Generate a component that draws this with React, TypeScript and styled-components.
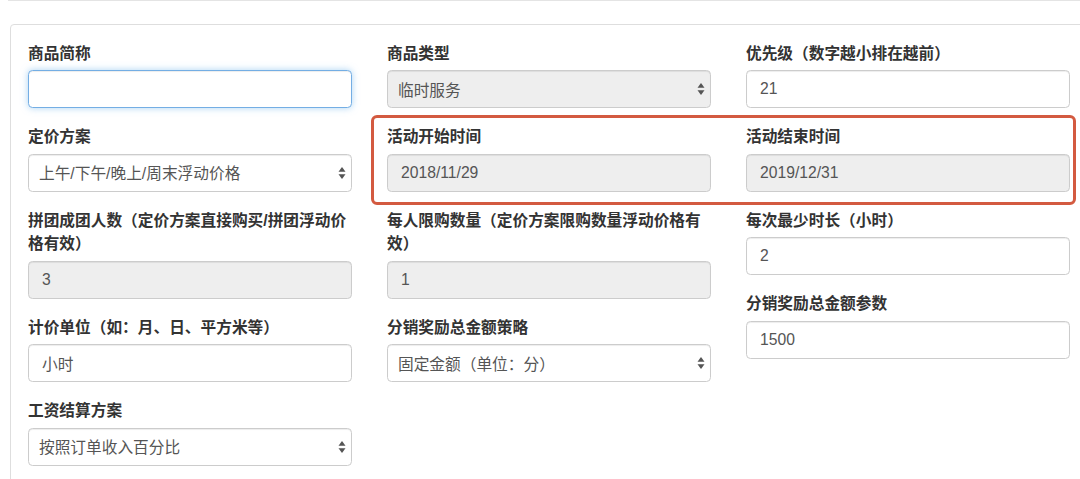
import styled, { createGlobalStyle } from 'styled-components';

const GlobalStyle = createGlobalStyle`
  html, body {
    margin: 0;
    padding: 0;
    background: #ffffff;
    overflow: hidden;
  }
  body {
    font-family: "Liberation Sans", "Noto Sans CJK SC", sans-serif;
    color: #333333;
  }
`;

const Page = styled.div`
  width: 1080px;
  height: 479px;
  overflow: hidden;
`;

const PrevPanelEdge = styled.div`
  margin-left: 8px;
  height: 1px;
  background: #e4e4e4;
`;

const Panel = styled.div`
  margin: 23px 0 0 10px;
  width: 1100px;
  height: 600px;
  border: 1px solid #dedede;
  border-radius: 4px;
  padding: 16.5px 0 0 17px;
  box-sizing: border-box;
`;

const Grid = styled.div`
  position: relative;
  display: grid;
  grid-template-columns: 324px 324px 324px;
  column-gap: 35px;
  align-items: start;
`;

const Column = styled.div`
  display: flex;
  flex-direction: column;
`;

const FormGroup = styled.div`
  margin-bottom: 17px;
`;

const Label = styled.label`
  display: block;
  font-size: 15.7px;
  font-weight: bold;
  line-height: 23.5px;
  margin-bottom: 5px;
  color: #333333;
`;

const Input = styled.input<{ $focused?: boolean }>`
  display: block;
  width: 100%;
  height: 38px;
  box-sizing: border-box;
  padding: 0 13px;
  font-family: inherit;
  font-size: 15.7px;
  color: #555555;
  background: ${({ disabled }) => (disabled ? '#eeeeee' : '#ffffff')};
  border: 1px solid ${({ $focused }) => ($focused ? '#74aee4' : '#cccccc')};
  border-radius: 4.5px;
  outline: none;
  box-shadow: ${({ $focused }) =>
    $focused
      ? 'inset 0 1px 1px rgba(0,0,0,.075), 0 0 7px rgba(102,175,233,.55)'
      : 'inset 0 1px 1px rgba(0,0,0,.075)'};
  &:disabled {
    -webkit-text-fill-color: #555555;
    opacity: 1;
  }
`;

const SelectBox = styled.div<{ $disabled?: boolean }>`
  display: flex;
  align-items: center;
  justify-content: space-between;
  height: 38px;
  box-sizing: border-box;
  padding: 0 5px 0 10px;
  font-size: 15.7px;
  color: #555555;
  background: ${({ $disabled }) => ($disabled ? '#eeeeee' : '#ffffff')};
  border: 1px solid #cccccc;
  border-radius: 4.5px;
  box-shadow: inset 0 1px 1px rgba(0, 0, 0, 0.075);
`;

const Highlight = styled.div`
  position: absolute;
  left: 343px;
  top: 73px;
  width: 705px;
  height: 90px;
  box-sizing: border-box;
  border: 3px solid #d35a40;
  border-radius: 6px;
  pointer-events: none;
`;

const Arrows = () => (
  <svg width="8" height="14" viewBox="0 0 8 14">
    <path d="M4 1 L7.5 5.8 L0.5 5.8 Z" fill="#555" />
    <path d="M4 13 L7.5 8.2 L0.5 8.2 Z" fill="#555" />
  </svg>
);

type FieldProps = {
  label: string;
  value?: string;
  disabled?: boolean;
  focused?: boolean;
  select?: boolean;
};

const Field = ({ label, value = '', disabled, focused, select }: FieldProps) => (
  <FormGroup>
    <Label>{label}</Label>
    {select ? (
      <SelectBox $disabled={disabled}>
        <span>{value}</span>
        <Arrows />
      </SelectBox>
    ) : (
      <Input value={value} readOnly disabled={disabled} $focused={focused} />
    )}
  </FormGroup>
);

export default function App() {
  return (
    <Page>
      <GlobalStyle />
      <PrevPanelEdge />
      <Panel>
        <Grid>
          <Column>
            <Field label="商品简称" focused />
            <Field label="定价方案" value="上午/下午/晚上/周末浮动价格" select />
            <Field label="拼团成团人数（定价方案直接购买/拼团浮动价格有效）" value="3" disabled />
            <Field label="计价单位（如：月、日、平方米等）" value="小时" />
            <Field label="工资结算方案" value="按照订单收入百分比" select />
          </Column>
          <Column>
            <Field label="商品类型" value="临时服务" select disabled />
            <Field label="活动开始时间" value="2018/11/29" disabled />
            <Field label="每人限购数量（定价方案限购数量浮动价格有效）" value="1" disabled />
            <Field label="分销奖励总金额策略" value="固定金额（单位：分）" select />
          </Column>
          <Column>
            <Field label="优先级（数字越小排在越前）" value="21" />
            <Field label="活动结束时间" value="2019/12/31" disabled />
            <Field label="每次最少时长（小时）" value="2" />
            <Field label="分销奖励总金额参数" value="1500" />
          </Column>
          <Highlight />
        </Grid>
      </Panel>
    </Page>
  );
}
